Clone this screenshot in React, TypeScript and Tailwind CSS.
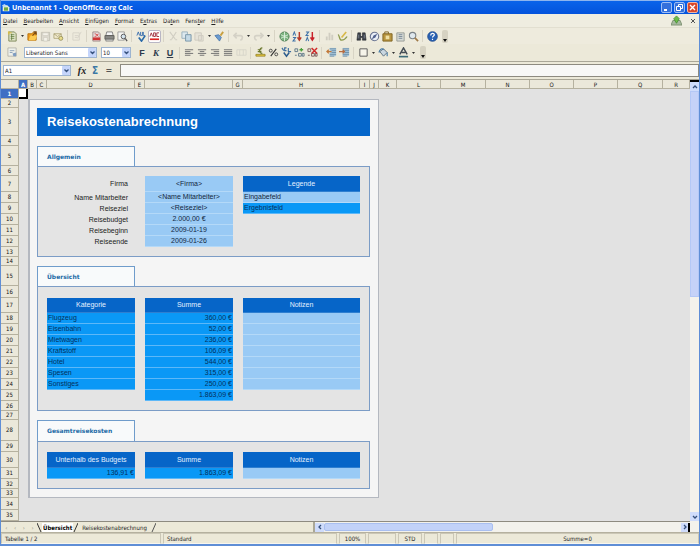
import React from 'react';
import clsx from 'clsx';

type IconName =
    | 'doc' | 'folder' | 'disk' | 'mail' | 'edit' | 'pdf' | 'printer' | 'preview' | 'spell' | 'autospell'
    | 'cut' | 'copy' | 'paste' | 'brush' | 'undo' | 'redo' | 'globe' | 'sortAsc' | 'sortDesc' | 'chart'
    | 'draw' | 'find' | 'navigator' | 'gallery' | 'database' | 'zoom' | 'help' | 'styles'
    | 'left' | 'center' | 'right' | 'justify' | 'merge' | 'currency' | 'percent' | 'standard' | 'addDec'
    | 'delDec' | 'indentLess' | 'indentMore' | 'border' | 'fill' | 'fontColor' | 'update';

const textLines = (xs: number[][]) => xs.map(([a, b], i) => <path key={i} d={`M${a} ${3 + i * 2}H${b}`} stroke="#777" strokeWidth="1.1" />);

const ICONS: Record<IconName, React.ReactNode> = {
    doc: (
        <>
            <path d="M2 1h6l2 2v8H2z" fill="#dfe4c8" stroke="#7d8758" />
            <path d="M4 4h4M4 6h4M4 8h4M5 3v7" stroke="#5f7a3a" strokeWidth=".8" />
            <path d="M1 2h4M2 0v4" stroke="#e0c040" />
        </>
    ),
    folder: (
        <>
            <path d="M1 3h4l1-1h4v8H1z" fill="#f0a020" stroke="#b8700a" />
            <path d="M2 9l2-4h7l-2 5H2z" fill="#fccb50" />
            <path d="M6 5l4-4M7 1h3v3" stroke="#7a4a10" strokeWidth="1.2" />
        </>
    ),
    disk: (
        <>
            <path d="M1.500 1.500h9v9h-9z" fill="#dedbd0" stroke="#c2bfb2" />
            <path d="M3 2h6v3H3zM4 7h4v4H4z" fill="#f4f2ea" stroke="#c8c5b8" strokeWidth=".6" />
        </>
    ),
    mail: (
        <>
            <path d="M1 3h8v5H1z" fill="#f2ecd0" stroke="#a39a6a" strokeWidth=".8" />
            <path d="M1 3l4 3 4-3" stroke="#a39a6a" strokeWidth=".8" />
            <circle cx="8.500" cy="8" r="2.200" fill="#e8dc8a" stroke="#8a8450" strokeWidth=".8" />
        </>
    ),
    edit: <path d="M1 2h7v8H1zM3 5h4M3 7h3M10 1L6 8" stroke="#d6d3c8" />,
    pdf: (
        <>
            <path d="M2 1h6l2 2v8H2z" fill="#e8dcdc" stroke="#8a7676" strokeWidth=".8" />
            <path d="M2 7h8v3H2z" fill="#cf3636" />
            <path d="M4 3c2 0 3 2 4 3M8 3C7 5 5 6 4 6" stroke="#c22" strokeWidth=".8" />
        </>
    ),
    printer: (
        <>
            <path d="M3 1h6l1 4H2z" fill="#f4f4f4" stroke="#666" strokeWidth=".8" />
            <path d="M1 5h10v4H1z" fill="#8a8a86" stroke="#4e4e4a" strokeWidth=".8" />
            <path d="M2 9h8v2H2z" fill="#d8d8d4" stroke="#555" strokeWidth=".6" />
        </>
    ),
    preview: (
        <>
            <path d="M1 1h7v9H1z" fill="#f6f6f2" stroke="#888" strokeWidth=".8" />
            <circle cx="7" cy="6" r="2.500" fill="#d5e4ee" stroke="#555" />
            <path d="M9 8l2 3" stroke="#555" strokeWidth="1.400" />
        </>
    ),
    spell: (
        <>
            <path d="M1 5l1.500-4L4 5M5 1v4h2V1M8 1v4h2" stroke="#3b6fae" />
            <path d="M3 7l3 4 4-6" stroke="#2a6aa8" strokeWidth="1.800" />
        </>
    ),
    autospell: (
        <>
            <path d="M1 6l1.500-4L4 6M5 2v4h2V2zM8.500 6V2H11M8.500 6H11" stroke="#a03040" />
            <path d="M1 9h10" stroke="#d22" strokeWidth="1.800" />
        </>
    ),
    cut: <path d="M2 1l6 8M9 1L4 9M2 9.500h2M8 9.500h2" stroke="#d0cdc2" strokeWidth="1.200" />,
    copy: (
        <>
            <path d="M1 1h6v7H1z" fill="#dde8ee" stroke="#9ab0bc" />
            <path d="M5 4h6v7H5z" fill="#c4d9e6" stroke="#7896a8" />
        </>
    ),
    paste: <path d="M1 2h7v8H1zM5 5h5v6H5z" fill="#e6e3d8" stroke="#cecbc0" />,
    brush: (
        <>
            <path d="M10 1L7 5" stroke="#c9a040" strokeWidth="2" />
            <path d="M1 5l4-1 3 3-2 4z" fill="#6c9cd0" stroke="#3d6ca6" strokeWidth=".8" />
        </>
    ),
    undo: <path d="M4 2L1 5l3 3M1.500 5H8c3 0 3 4 0 5" stroke="#d4d1c6" strokeWidth="1.800" />,
    redo: <path d="M8 2l3 3-3 3M10.500 5H4c-3 0-3 4 0 5" stroke="#d4d1c6" strokeWidth="1.800" />,
    globe: (
        <>
            <circle cx="6" cy="6" r="5" fill="#7db480" stroke="#4c7c52" />
            <path d="M2 4c3 2 5 2 8 0M2 8c3-2 5-2 8 0M6 1v10" stroke="#e6f4e6" strokeWidth=".9" />
        </>
    ),
    sortAsc: (
        <>
            <path d="M1 5l1.500-4L4 5M1 7h3l-3 4h3" stroke="#3f72a8" strokeWidth="1.100" />
            <path d="M8 1v8M6 7l2 3 2-3" stroke="#b83a28" strokeWidth="1.600" />
        </>
    ),
    sortDesc: (
        <>
            <path d="M1 1h3L1 5h3M1 11l1.500-4L4 11" stroke="#3f72a8" strokeWidth="1.100" />
            <path d="M8 1v8M6 7l2 3 2-3" stroke="#c8202a" strokeWidth="1.600" />
        </>
    ),
    chart: <path d="M3 10V6M6 10V2M9 10V4" stroke="#d0cdc1" strokeWidth="2" />,
    draw: (
        <>
            <path d="M1 4c2 0 1 6 4 6s4-1 6-4" stroke="#8c9a4c" strokeWidth="1.400" />
            <path d="M10 1L5 7" stroke="#d8b848" strokeWidth="1.800" />
        </>
    ),
    find: (
        <>
            <path d="M2 2h3v3l1 1 1-1V2h3l1 8H7V7H5v3H1z" fill="#3c4048" stroke="#22262c" strokeWidth=".6" />
            <path d="M3 4v4M9 4v4" stroke="#8a94a4" strokeWidth=".8" />
        </>
    ),
    navigator: (
        <>
            <circle cx="6" cy="6" r="4.600" fill="#e9eef6" stroke="#6a7490" strokeWidth="1.200" />
            <path d="M9 3L7 7 3 9l2-4z" fill="#50608c" />
        </>
    ),
    gallery: (
        <>
            <path d="M1 3h10v8H1z" fill="#b99640" stroke="#7e6220" />
            <path d="M3 3V1h4v2" stroke="#7e6220" />
            <path d="M4 5h4v4H4z" fill="#efe0a4" />
        </>
    ),
    database: (
        <>
            <path d="M2 2h8v9H2z" fill="#d6d9d4" stroke="#868c86" strokeWidth=".8" />
            <path d="M4 4h4M4 6h4M4 8h4" stroke="#7a8a98" />
        </>
    ),
    zoom: (
        <>
            <circle cx="5" cy="5" r="3.500" fill="#dfe8ee" stroke="#7a8288" strokeWidth="1.200" />
            <path d="M7.500 7.500L11 11" stroke="#a07a48" strokeWidth="1.800" />
        </>
    ),
    help: (
        <>
            <circle cx="6" cy="6" r="5.300" fill="#2a62b4" stroke="#1b4688" strokeWidth=".8" />
            <path d="M4 5c0-3 4-3 4-.8C8 5.600 6 5.500 6 7.200M6 8.500v1.300" stroke="#fff" strokeWidth="1.300" />
        </>
    ),
    styles: (
        <>
            <path d="M1 1h9v9H1z" fill="#eef0ea" stroke="#a8aaa0" strokeWidth=".8" />
            <path d="M3 4h5M3 6h3" stroke="#8aa0b8" />
            <path d="M6 7l4-1v4H7z" fill="#7e9cc0" />
        </>
    ),
    left: textLines([[1, 10], [1, 7], [1, 10], [1, 7]]),
    center: textLines([[1, 10], [3, 8], [1, 10], [3, 8]]),
    right: textLines([[1, 10], [4, 10], [1, 10], [4, 10]]),
    justify: textLines([[1, 10], [1, 10], [1, 10], [1, 10]]),
    merge: <path d="M1 3h10v6H1zM4 3v6M8 3v6" stroke="#d8d5ca" />,
    currency: (
        <>
            <path d="M1 8h10v2H1z" fill="#e6c83c" stroke="#8c7a20" strokeWidth=".8" />
            <path d="M8 1c-4 0-4 6 0 6M3 3h4M3 5h4" stroke="#68762a" strokeWidth="1.200" />
        </>
    ),
    percent: (
        <>
            <circle cx="3" cy="4" r="1.600" stroke="#444" />
            <circle cx="9" cy="8" r="1.600" stroke="#444" />
            <path d="M9 2L3 10" stroke="#333" strokeWidth="1.200" />
        </>
    ),
    standard: (
        <>
            <path d="M1 1l2 3M6 1H4v3h2M8 1v4h3" stroke="#3a6ca0" strokeWidth="1.200" />
            <path d="M3 6l3 4 3-4" stroke="#2c5c8c" strokeWidth="1.600" />
        </>
    ),
    addDec: (
        <>
            <path d="M1 2h3v3H1zM1 9h2M5 7h3v3H5zM9 7h2v3H9z" stroke="#5c7688" />
            <path d="M8 1v4M6 3h4" stroke="#4aa03c" strokeWidth="1.400" />
        </>
    ),
    delDec: (
        <>
            <path d="M1 2h3v3H1zM1 9h2M5 7h3v3H5zM9 7h2v3H9z" stroke="#7a5a5a" />
            <path d="M5 1l6 6M11 1L5 7" stroke="#d02828" strokeWidth="1.600" />
        </>
    ),
    indentLess: (
        <>
            <path d="M4 1h7v9H4z" fill="#a9c8dc" />
            <path d="M4 2h7M6 4h5M6 6h5M4 8h7M4 10h5" stroke="#6d8ea6" />
            <path d="M6 5H1M3 3L1 5l2 2" stroke="#c07838" strokeWidth="1.400" />
        </>
    ),
    indentMore: (
        <>
            <path d="M4 1h7v9H4z" fill="#a9c8dc" />
            <path d="M4 2h7M6 4h5M6 6h5M4 8h7M4 10h5" stroke="#6d8ea6" />
            <path d="M0 5h6M4 3l2 2-2 2" stroke="#b86c40" strokeWidth="1.400" />
        </>
    ),
    border: <path d="M2 2h8v8H2z" fill="#f6f4ea" stroke="#555" />,
    fill: (
        <>
            <path d="M2 5l4-3 4 4-4 4z" fill="#c8d6e0" stroke="#5b6d7c" />
            <path d="M1 6c1-4 4-5 5-3M10 6v4" stroke="#3f78a8" strokeWidth="1.200" />
        </>
    ),
    fontColor: (
        <>
            <path d="M2 8l4-7 4 7M4 6h4" stroke="#444c54" strokeWidth="1.600" />
            <path d="M1 10.500h10" stroke="#3c6a78" strokeWidth="1.800" />
        </>
    ),
    update: (
        <>
            <path d="M2 6h8l2 5H0z" fill="#a8b8a0" stroke="#6c8460" strokeWidth=".8" />
            <path d="M6 1l3 3-3 5-3-5z" fill="#6cbc48" stroke="#3e8a2c" strokeWidth=".8" />
        </>
    ),
};

const Icon = ({ name }: { name: IconName }) => (
    <svg viewBox="0 0 12 12" width="11" height="11" fill="none" aria-hidden="true">
        {ICONS[name]}
    </svg>
);

const Tool = ({ name, label, active }: { name: IconName; label: string; active?: boolean }) => (
    <button
        aria-label={label}
        className={clsx(
            'flex h-[13px] w-[13px] shrink-0 items-center justify-center rounded-xs',
            active && 'border border-[#b9b6c4] bg-white'
        )}
    >
        <Icon name={name} />
    </button>
);

const Drop = ({ label }: { label: string }) => (
    <button aria-label={label} className="flex w-[7px] shrink-0 items-center justify-center">
        <svg width="3" height="2" viewBox="0 0 3 2"><path d="M0 0h3L1.500 2z" fill="#333" /></svg>
    </button>
);

const Sep = () => <span className="mx-[2px] h-3 w-px shrink-0 border-l border-[#d8d4c5] pr-px" />;

const Overflow = () => (
    <button aria-label="Mehr" className="ml-[3px] flex h-[13px] w-[6px] items-end justify-center rounded-xs bg-[#d6d2c2] pb-px">
        <svg width="4" height="3" viewBox="0 0 4 3"><path d="M0 0h4L2 3z" fill="#111" /></svg>
    </button>
);

const Combo = ({ label, options, className }: { label: string; options: string[]; className: string }) => (
    <div className={clsx('relative shrink-0', className)}>
        <select
            aria-label={label}
            className="block h-[11px] w-full appearance-none border border-[#9db4d0] bg-white pl-px text-[6px] leading-[9px] text-[#222]"
        >
            {options.map(o => <option key={o}>{o}</option>)}
        </select>
        <span className="pointer-events-none absolute top-px right-px flex h-[9px] w-[8px] items-center justify-center rounded-[1px] bg-[#c5d5fb]">
            <svg width="5" height="4" viewBox="0 0 5 4" fill="none"><path d="M.5.5l2 2 2-2" stroke="#35507c" strokeWidth="1.300" /></svg>
        </span>
    </div>
);

const MENU = ['Datei', 'Bearbeiten', 'Ansicht', 'Einfügen', 'Format', 'Extras', 'Daten', 'Fenster', 'Hilfe'];
const MNEMONIC = [0, 0, 0, 0, 0, 1, 2, 4, 0];

const COLUMNS = [
    { name: 'A', width: 'w-[9px]' },
    { name: 'B', width: 'w-[9px]' },
    { name: 'C', width: 'w-[10px]' },
    { name: 'D', width: 'w-[88px]' },
    { name: 'E', width: 'w-[10px]' },
    { name: 'F', width: 'w-[88px]' },
    { name: 'G', width: 'w-[10px]' },
    { name: 'H', width: 'w-[117px]' },
    { name: 'I', width: 'w-[10px]' },
    { name: 'J', width: 'w-[9px]' },
    { name: 'K', width: 'w-[18px]' },
    { name: 'L', width: 'w-[44px]' },
    { name: 'M', width: 'w-[45px]' },
    { name: 'N', width: 'w-[44px]' },
    { name: 'O', width: 'w-[44px]' },
    { name: 'P', width: 'w-[44px]' },
    { name: 'Q', width: 'w-[45px]' },
    { name: 'R', width: 'w-auto' },
];

type Style = 'label' | 'input' | 'inputLeft' | 'head' | 'result' | 'resultRight' | 'blank';
type Cell = [Style, string];

interface SheetRow {
    height: string;
    kind: 'outer' | 'page' | 'pageTop' | 'pageBottom' | 'title' | 'tab' | 'boxTop' | 'box' | 'boxBottom';
    text?: string;
    cells?: [Cell, Cell, Cell];
}

const NONE: Cell = ['blank', ''];
const NOTE: Cell = ['input', ''];

const general = (label: string, value: string, legend: Cell = NONE): SheetRow => ({
    height: 'h-[11px]', kind: 'box', cells: [['label', label], ['input', value], legend],
});
const cost = (label: string, value: string): SheetRow => ({
    height: 'h-[11px]', kind: 'box', cells: [['result', label], ['resultRight', value], NOTE],
});

const ROWS: SheetRow[] = [
    { height: 'h-[10px]', kind: 'outer' },
    { height: 'h-[9px]', kind: 'pageTop' },
    { height: 'h-[28px]', kind: 'title', text: 'Reisekostenabrechnung' },
    { height: 'h-[10px]', kind: 'page' },
    { height: 'h-[20px]', kind: 'tab', text: 'Allgemein' },
    { height: 'h-[10px]', kind: 'boxTop' },
    { height: 'h-[16px]', kind: 'box', cells: [['label', 'Firma'], ['input', '<Firma>'], ['head', 'Legende']] },
    general('Name Mitarbeiter', '<Name Mitarbeiter>', ['inputLeft', 'Eingabefeld']),
    general('Reiseziel', '<Reiseziel>', ['result', 'Ergebnisfeld']),
    general('Reisebudget', '2.000,00 €'),
    general('Reisebeginn', '2009-01-19'),
    general('Reiseende', '2009-01-26'),
    { height: 'h-[10px]', kind: 'boxBottom' },
    { height: 'h-[9px]', kind: 'page' },
    { height: 'h-[20px]', kind: 'tab', text: 'Übersicht' },
    { height: 'h-[12px]', kind: 'boxTop' },
    { height: 'h-[15px]', kind: 'box', cells: [['head', 'Kategorie'], ['head', 'Summe'], ['head', 'Notizen']] },
    cost('Flugzeug', '360,00 €'),
    cost('Eisenbahn', '52,00 €'),
    cost('Mietwagen', '236,00 €'),
    cost('Kraftstoff', '106,09 €'),
    cost('Hotel', '544,00 €'),
    cost('Spesen', '315,00 €'),
    cost('Sonstiges', '250,00 €'),
    { height: 'h-[11px]', kind: 'box', cells: [NONE, ['resultRight', '1.863,09 €'], NONE] },
    { height: 'h-[10px]', kind: 'boxBottom' },
    { height: 'h-[9px]', kind: 'page' },
    { height: 'h-[21px]', kind: 'tab', text: 'Gesamtreisekosten' },
    { height: 'h-[11px]', kind: 'boxTop' },
    { height: 'h-[16px]', kind: 'box', cells: [['head', 'Unterhalb des Budgets'], ['head', 'Summe'], ['head', 'Notizen']] },
    { height: 'h-[11px]', kind: 'box', cells: [['resultRight', '136,91 €'], ['resultRight', '1.863,09 €'], NOTE] },
    { height: 'h-[10px]', kind: 'boxBottom' },
    { height: 'h-[9px]', kind: 'pageBottom' },
    { height: 'h-[12px]', kind: 'outer' },
    { height: 'h-[11px]', kind: 'outer' },
];

const CELL: Record<Style, string> = {
    blank: 'bg-[#e4e4e4]',
    label: 'bg-[#e4e4e4] pr-[7px] text-right text-[#222]',
    input: 'border-b border-[#b4d9f8] bg-[#99caf5] text-center text-[#12263c]',
    inputLeft: 'border-b border-[#b4d9f8] bg-[#99caf5] pl-px text-left text-[#12263c]',
    head: 'border-b border-[#2f7fd0] bg-[#0665c8] text-center text-[#e4f1ff]',
    result: 'border-b border-[#5db8f8] bg-[#0a98f6] pl-px text-left text-[#04305c]',
    resultRight: 'border-b border-[#5db8f8] bg-[#0a98f6] pr-px text-right text-[#04305c]',
};

const Row = ({ row, index }: { row: SheetRow; index: number }) => {
    const { kind, text, cells } = row;
    const first = index === 0;
    const edge = 'border-[#b4b8c0]';
    const isBox = kind === 'box' || kind === 'boxTop' || kind === 'boxBottom';
    const boxLine = clsx('border-[#7b9cc6] bg-[#e4e4e4]', kind === 'boxTop' && 'border-t', kind === 'boxBottom' && 'border-b');

    return (
        <tr className={row.height}>
            <th
                scope="row"
                className={clsx(
                    "border-r border-b border-[#b5b19f] text-center font-['DejaVu_Sans_Condensed','DejaVu_Sans',sans-serif] text-[6px]",
                    first ? 'bg-[#3f6fc4] font-bold text-white' : 'bg-[#ebe8da] font-normal text-[#111]'
                )}
            >
                {index + 1}
            </th>
            <td className={first ? 'border-r-2 border-b-2 border-black bg-white' : 'bg-[#e2e2e2]'} />
            {kind === 'outer' && <td colSpan={9} className="bg-[#e2e2e2]" />}
            {(kind === 'pageTop' || kind === 'pageBottom') && (
                <td
                    colSpan={9}
                    className={clsx('border-r border-l-2 bg-[#f5f5f5]', edge, kind === 'pageTop' ? 'border-t' : 'border-b')}
                />
            )}
            {kind !== 'outer' && kind !== 'pageTop' && kind !== 'pageBottom' && (
                <>
                    <td className={clsx('border-l-2 bg-[#f5f5f5]', edge)} />
                    {kind === 'page' && <td colSpan={7} className="bg-[#f5f5f5]" />}
                    {kind === 'title' && (
                        <td colSpan={7} className="bg-[#0566ca] pl-[10px] text-left text-[13px] leading-4 font-bold text-white">{text}</td>
                    )}
                    {kind === 'tab' && (
                        <>
                            <td
                                colSpan={2}
                                className="border border-b-0 border-[#6f9ccb] bg-[#f8fafb] pl-[9px] text-left font-['DejaVu_Sans',sans-serif] text-[6px] font-bold text-[#1c6aa6]"
                            >
                                {text}
                            </td>
                            <td colSpan={5} className="bg-[#f5f5f5]" />
                        </>
                    )}
                    {isBox && (
                        <>
                            <td className={clsx('border-l', boxLine)} />
                            {cells ? (
                                cells.map(([style, value], i) => (
                                    <React.Fragment key={i}>
                                        {i > 0 && <td className={boxLine} />}
                                        <td className={clsx('whitespace-nowrap', CELL[style])}>{value}</td>
                                    </React.Fragment>
                                ))
                            ) : (
                                <td colSpan={5} className={boxLine} />
                            )}
                            <td className={clsx('border-r', boxLine)} />
                        </>
                    )}
                    <td className={clsx('border-r bg-[#f5f5f5]', edge)} />
                </>
            )}
            <td colSpan={8} className="bg-[#e2e2e2]" />
        </tr>
    );
};

const Arrow = ({ d }: { d: string }) => (
    <svg width="6" height="6" viewBox="0 0 6 6" fill="none"><path d={d} stroke="#35507c" strokeWidth="1.300" /></svg>
);

export default function App() {
    return (
        <div className="flex min-h-screen flex-col border-x border-b-2 border-[#5f8ed6] bg-[#ece9d8] font-['DejaVu_Sans_Condensed','DejaVu_Sans',sans-serif] text-[6px] leading-[9px] text-[#222]">
            {/* Title bar */}
            <header className="flex h-[14px] items-center gap-[2px] border-t border-[#8db4ee] bg-linear-to-b from-[#0a63ea] to-[#0453dc] pr-px pl-px">
                <svg width="8" height="8" viewBox="0 0 12 12">
                    <path d="M1 2h7l3 3v6H1z" fill="#e8f0d8" />
                    <path d="M3 5h6v5H3z" fill="#6faa46" />
                    <path d="M0 2l4-2 3 3-4 2z" fill="#bcd8f2" />
                </svg>
                <h1 className="grow font-['Open_Sans',sans-serif] text-[7px] font-bold text-white">Unbenannt 1 - OpenOffice.org Calc</h1>
                <div className="flex gap-[2px]">
                    <button aria-label="Minimieren" className="h-[11px] w-[11px] rounded-xs border border-[#9dbdf4] bg-[#3470dc]">
                        <svg viewBox="0 0 9 9"><path d="M2 6h3v2H2z" fill="#fff" /></svg>
                    </button>
                    <button aria-label="Wiederherstellen" className="h-[11px] w-[11px] rounded-xs border border-[#9dbdf4] bg-[#3470dc]">
                        <svg viewBox="0 0 9 9" fill="none"><path d="M3.500 3V1.500h4v4H6M1.500 3.500h4v4h-4z" stroke="#fff" /></svg>
                    </button>
                    <button aria-label="Schließen" className="h-[11px] w-[11px] rounded-xs border border-[#f0b4a4] bg-[#d8482c]">
                        <svg viewBox="0 0 9 9"><path d="M2 2l5 5M7 2L2 7" stroke="#fff" strokeWidth="1.400" /></svg>
                    </button>
                </div>
            </header>

            {/* Menu bar */}
            <nav className="flex h-[13px] items-center bg-[#efede0] pr-[3px] pl-[2px]">
                <div className="flex grow gap-[6px]">
                    {MENU.map((item, i) => (
                        <button key={item}>
                            {item.slice(0, MNEMONIC[i])}
                            <u>{item[MNEMONIC[i]]}</u>
                            {item.slice(MNEMONIC[i] + 1)}
                        </button>
                    ))}
                </div>
                <button aria-label="Aktualisieren" className="mr-2"><Icon name="update" /></button>
                <button aria-label="Dokument schließen">
                    <svg width="6" height="6" viewBox="0 0 6 6"><path d="M1 1l4 4M5 1L1 5" stroke="#555" /></svg>
                </button>
            </nav>

            {/* Standard toolbar */}
            <div className="flex h-[17px] items-center border-t border-[#e2dfd0] bg-[#eeebdd] pl-[5px]">
                <Tool name="doc" label="Neu" />
                <Drop label="Neu Optionen" />
                <Tool name="folder" label="Öffnen" />
                <Tool name="disk" label="Speichern" />
                <Tool name="mail" label="E-Mail" />
                <Sep />
                <Tool name="edit" label="Bearbeiten" />
                <Sep />
                <Tool name="pdf" label="PDF" />
                <Tool name="printer" label="Drucken" />
                <Tool name="preview" label="Seitenansicht" />
                <Sep />
                <Tool name="spell" label="Rechtschreibung" />
                <Tool name="autospell" label="Automatische Prüfung" active />
                <Sep />
                <Tool name="cut" label="Ausschneiden" />
                <Tool name="copy" label="Kopieren" />
                <Tool name="paste" label="Einfügen" />
                <Drop label="Einfügen Optionen" />
                <Tool name="brush" label="Format übertragen" />
                <Sep />
                <Tool name="undo" label="Rückgängig" />
                <Drop label="Rückgängig Optionen" />
                <Tool name="redo" label="Wiederherstellen" />
                <Drop label="Wiederherstellen Optionen" />
                <Sep />
                <Tool name="globe" label="Hyperlink" />
                <Tool name="sortAsc" label="Aufsteigend" />
                <Tool name="sortDesc" label="Absteigend" />
                <Sep />
                <Tool name="chart" label="Diagramm" />
                <Tool name="draw" label="Zeichnen" />
                <Sep />
                <Tool name="find" label="Suchen" />
                <Tool name="navigator" label="Navigator" />
                <Tool name="gallery" label="Gallery" />
                <Tool name="database" label="Datenquellen" />
                <Tool name="zoom" label="Zoom" />
                <Sep />
                <Tool name="help" label="Hilfe" />
                <Overflow />
            </div>

            {/* Formatting toolbar */}
            <div className="flex h-[17px] items-center bg-[#ece9d9] pl-[5px]">
                <Tool name="styles" label="Formatvorlagen" />
                <Combo label="Schriftname" options={['Liberation Sans']} className="ml-[5px] w-[73px]" />
                <Combo label="Schriftgröße" options={['10']} className="mr-1 ml-1 w-[30px]" />
                <div className="flex font-['Liberation_Sans',sans-serif] text-[9px] leading-3 font-bold text-[#2d3a4c]">
                    <button className="w-[14px]">F</button>
                    <button className="w-[14px] font-['Liberation_Serif',serif] italic">K</button>
                    <button className="w-[14px] underline">U</button>
                </div>
                <Sep />
                <Tool name="left" label="Linksbündig" />
                <Tool name="center" label="Zentriert" />
                <Tool name="right" label="Rechtsbündig" />
                <Tool name="justify" label="Blocksatz" />
                <Tool name="merge" label="Zellen verbinden" />
                <Sep />
                <Tool name="currency" label="Währung" />
                <Tool name="percent" label="Prozent" />
                <Tool name="standard" label="Standardformat" />
                <Tool name="addDec" label="Dezimalstelle hinzufügen" />
                <Tool name="delDec" label="Dezimalstelle löschen" />
                <Sep />
                <Tool name="indentLess" label="Einzug vermindern" />
                <Tool name="indentMore" label="Einzug erhöhen" />
                <Sep />
                <Tool name="border" label="Umrandung" />
                <Drop label="Umrandung Optionen" />
                <Tool name="fill" label="Hintergrundfarbe" />
                <Drop label="Hintergrundfarbe Optionen" />
                <Tool name="fontColor" label="Schriftfarbe" />
                <Drop label="Schriftfarbe Optionen" />
                <Overflow />
            </div>

            {/* Formula bar */}
            <div className="flex h-[19px] items-center border-y border-[#aaa797] pl-[2px]">
                <Combo label="Zellbezug" options={['A1']} className="w-[68px]" />
                <button className="ml-[6px] w-[10px] font-['Liberation_Serif',serif] text-[10px] font-bold italic">fx</button>
                <button className="w-[16px] text-center text-[10px] font-bold text-[#3b78a4]">Σ</button>
                <button className="w-[12px] text-center text-[9px] font-bold text-[#555]">=</button>
                <input aria-label="Formel" className="ml-[5px] h-[13px] min-w-0 grow border border-[#8e8b80] bg-[#f8f8f6] px-1" />
            </div>

            <main className="flex grow">
                <div className="flex min-w-0 grow flex-col">
                    <table className="w-full table-fixed border-separate border-spacing-0 font-['Liberation_Sans',Arial,sans-serif] text-[7px] leading-[8px] [&_td]:overflow-hidden [&_td]:py-0 [&_th]:p-0">
                        <colgroup>
                            <col className="w-[18px]" />
                            {COLUMNS.map(c => <col key={c.name} className={c.width} />)}
                        </colgroup>
                        <thead>
                            <tr className="h-[9px]">
                                <th className="border-r border-b border-[#b5b19f] bg-[#ebe8da]" />
                                {COLUMNS.map(c => (
                                    <th
                                        key={c.name}
                                        scope="col"
                                        className={clsx(
                                            "border-r border-b border-[#b5b19f] font-['DejaVu_Sans_Condensed','DejaVu_Sans',sans-serif] text-[6px] leading-[7px]",
                                            c.name === 'A' ? 'bg-[#3f6fc4] font-bold text-white' : 'bg-[#ebe8da] font-normal text-[#111]'
                                        )}
                                    >
                                        {c.name}
                                    </th>
                                ))}
                            </tr>
                        </thead>
                        <tbody>
                            {ROWS.map((row, i) => <Row key={i} row={row} index={i} />)}
                        </tbody>
                    </table>

                    {/* Sheet tabs and horizontal scrollbar */}
                    <div className="flex grow items-stretch border-t border-[#8e8b80]">
                        <div className="flex w-[312px] shrink-0 items-center">
                            <div className="flex w-[36px] justify-around pl-px text-[#8c897c]">
                                {['Erste', 'Vorherige', 'Nächste', 'Letzte'].map((l, i) => (
                                    <button key={l} aria-label={l}>{i < 2 ? '‹' : '›'}</button>
                                ))}
                            </div>
                            <svg width="5" height="9" viewBox="0 0 5 9"><path d="M0 0l4 9" stroke="#333" /></svg>
                            <button className="bg-white px-px font-bold text-black">Übersicht</button>
                            <svg width="5" height="9" viewBox="0 0 5 9"><path d="M5 0L1 9" stroke="#333" /></svg>
                            <button className="px-1">Reisekostenabrechnung</button>
                            <svg width="5" height="9" viewBox="0 0 5 9"><path d="M5 0L1 9" stroke="#555" /></svg>
                        </div>
                        <div className="flex grow items-center border-l-2 border-[#aaa797] bg-[#f3f2ec]">
                            <button aria-label="Nach links" className="flex h-[9px] w-[9px] items-center justify-center bg-[#cfdcfb]"><Arrow d="M4 1L2 3l2 2" /></button>
                            <div className="h-[8px] w-[45%] rounded-xs border border-[#a9bff0] bg-[#c2d2f8]" />
                            <span className="grow" />
                            <button aria-label="Nach rechts" className="flex h-[9px] w-[9px] items-center justify-center border-r-2 border-black bg-[#cfdcfb]"><Arrow d="M2 1l2 2-2 2" /></button>
                        </div>
                    </div>
                </div>
                <div className="flex w-[9px] shrink-0 flex-col border-t-2 border-black bg-[#f3f2ec] pb-[11px]">
                    <button aria-label="Nach oben" className="flex h-[9px] items-center justify-center bg-[#cfdcfb]"><Arrow d="M1 4l2-2 2 2" /></button>
                    <div className="h-[47%] border border-[#b4c8f6] bg-[#c5d2f8]" />
                    <span className="grow" />
                    <button aria-label="Nach unten" className="flex h-[9px] items-center justify-center bg-[#cfdcfb]"><Arrow d="M1 2l2 2 2-2" /></button>
                </div>
            </main>

            {/* Status bar */}
            <footer className="flex h-[12px] shrink-0 gap-[2px] border-t border-[#b5b19f] leading-[10px] *:border *:border-[#cbc7b6] *:border-b-[#f8f6ee]">
                <span className="w-[160px] pl-[3px]">Tabelle 1 / 2</span>
                <span className="w-[174px] pl-[3px]">Standard</span>
                <span className="w-[27px] text-center">100%</span>
                <span className="w-[28px]" />
                <span className="w-[24px] text-center">STD</span>
                <span className="w-[14px]" />
                <span className="w-[14px]" />
                <span className="grow text-center">Summe=0</span>
            </footer>
        </div>
    );
}
